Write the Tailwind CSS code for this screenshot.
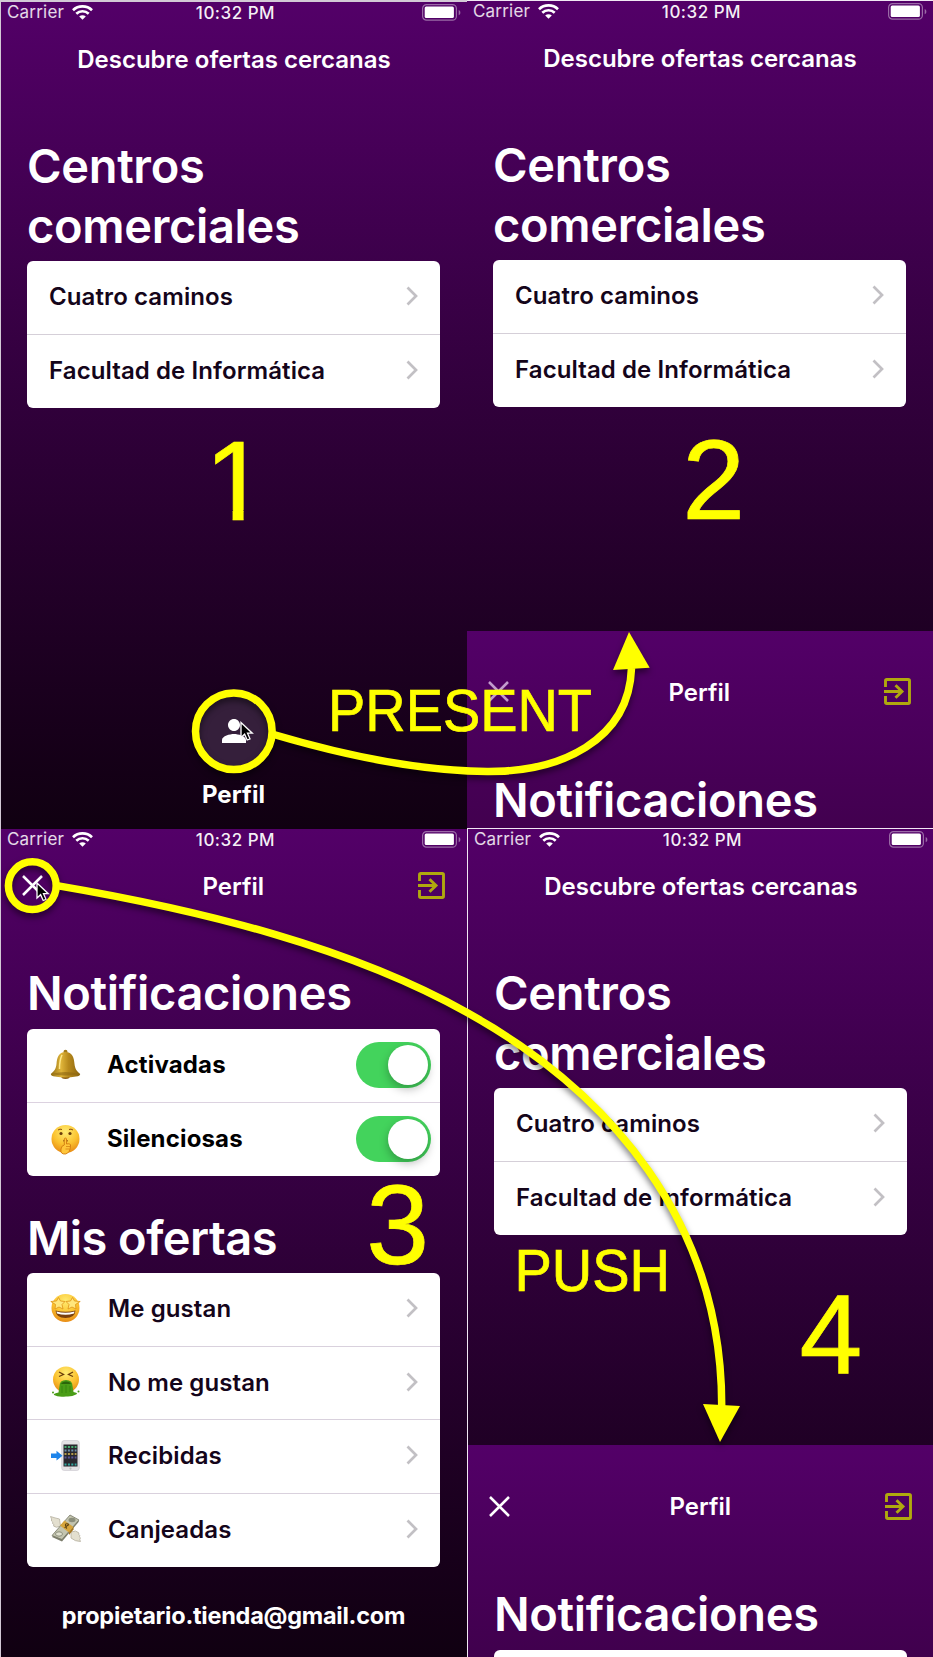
<!DOCTYPE html>
<html lang="es">
<head>
<meta charset="utf-8">
<title>Perfil: presentación de pantallas</title>
<script src="https://cdn.jsdelivr.net/npm/@tailwindcss/browser@4"></script>
</head>
<body class="bg-[#d3c9d6]">
<svg class="absolute size-0">
  <defs>
    <symbol id="wifi" viewBox="0 0 21 15"><path d="M1 5.2C6.2 .2 14.8 .2 20 5.2" fill="none" stroke="#fff" stroke-width="2.700"/><path d="M4.3 8.7C7.8 5.4 13.2 5.4 16.7 8.7" fill="none" stroke="#fff" stroke-width="2.700"/><path d="M10.500 14.700L7.200 11.400C9 9.800 12 9.800 13.800 11.400Z" fill="#fff"/></symbol>
    <symbol id="battery" viewBox="0 0 39 17"><rect x=".6" y=".6" width="33.800" height="15.600" rx="4" fill="none" stroke="#fff" stroke-opacity=".42" stroke-width="1.200"/><rect x="2.700" y="2.600" width="29.200" height="11.500" rx="1.500" fill="#fff"/><path d="M36.700 6v5.200c2.200-.8 2.200-4.400 0-5.200z" fill="#fff" fill-opacity=".42"/></symbol>
    <symbol id="chev" viewBox="0 0 12 20"><path d="M1.500 1.500L10 10L1.500 18.500" fill="none" stroke="#c2c0c4" stroke-width="2.700"/></symbol>
    <symbol id="exit" viewBox="0 0 27 27"><path d="M1.500 9V2.800Q1.500 1.500 2.800 1.500H24.200Q25.500 1.500 25.500 2.800V24.200Q25.500 25.500 24.200 25.500H2.800Q1.500 25.500 1.500 24.200V18M0 13.500H17.500M11.500 7.200L18 13.500L11.500 19.800" fill="none" stroke="#b0a90e" stroke-width="2.900"/></symbol>
    <symbol id="close" viewBox="0 0 21 21"><path d="M1 1L20 20M20 1L1 20" fill="none" stroke="currentColor" stroke-width="2.500"/></symbol>
    <linearGradient id="gold" x1="0" x2="1"><stop offset="0" stop-color="#8f6a10"/><stop offset=".35" stop-color="#e0b53a"/><stop offset=".6" stop-color="#b88a1c"/><stop offset="1" stop-color="#8a6410"/></linearGradient>
    <radialGradient id="face" cx=".5" cy=".25" r=".8"><stop offset="0" stop-color="#ffec72"/><stop offset=".55" stop-color="#fbc22f"/><stop offset="1" stop-color="#e58311"/></radialGradient>
    <clipPath id="stem"><path d="M200 430H262V510H243.600V524H232.600V510H200Z"/></clipPath>
  </defs>
</svg>
<main class="relative w-[933px] h-[1657px] overflow-hidden font-['Inter','Noto_Sans',sans-serif] text-white flex">

  <div class="w-[467px] shrink-0 pl-px pt-[2px] flex flex-col">
    <!-- 1: home -->
    <section class="h-[827px] shrink-0 flex flex-col overflow-hidden bg-linear-to-b from-[#530068] to-[#100011]">
      <div class="h-[21px] shrink-0 grid grid-cols-3 items-center pl-[6px] pr-[6px] text-[17px] leading-none text-white/85">
        <div class="flex items-center gap-[8px]"><span class="tracking-[0.2px]">Carrier</span><svg class="w-[21px] h-[15px]"><use href="#wifi"/></svg></div>
        <span class="text-center font-medium tracking-[0.5px] pl-[3px] pt-px text-white/95">10:32 PM</span>
        <svg class="w-[39px] h-[17px] justify-self-end"><use href="#battery"/></svg>
      </div>
      <div class="h-[72px] shrink-0 flex items-center justify-center pt-px text-[24px] font-semibold">Descubre ofertas cercanas</div>
      <h1 class="mt-[41px] ml-[26px] text-[47px] leading-[60px] font-semibold w-[300px] tracking-[-0.35px]">Centros comerciales</h1>
      <div class="mt-[5px] ml-[26px] mr-[27.500px] h-[147px] shrink-0 grid grid-rows-2 rounded-[6px] bg-white divide-y divide-[#d5cfd8] text-[24px] font-semibold text-[#14051a]">
        <div class="flex items-center justify-between pl-[22px] pr-[22px] pb-[2px]"><span class="mt-[2px] tracking-[0.1px]">Cuatro caminos</span><svg class="w-3 h-5"><use href="#chev"/></svg></div>
        <div class="flex items-center justify-between pl-[22px] pr-[22px] pb-[2px]"><span class="mt-[2px] tracking-[0.1px]">Facultad de Informática</span><svg class="w-3 h-5"><use href="#chev"/></svg></div>
      </div>
      <div class="mt-[281px] flex flex-col items-center pr-px">
        <div class="size-[84px] rounded-full bg-[#351f3b] flex items-center justify-center"><svg class="size-9 fill-white" viewBox="0 0 24 24"><path d="M12 12c2.210 0 4-1.790 4-4s-1.790-4-4-4-4 1.790-4 4 1.790 4 4 4zm0 2c-2.670 0-8 1.340-8 4v2h16v-2c0-2.660-5.330-4-8-4z"/></svg></div>
        <span class="mt-[4px] text-[24px] leading-[36px] font-bold tracking-[0.1px]">Perfil</span>
      </div>
    </section>

    <!-- 3: profile -->
    <section class="h-[828px] shrink-0 flex flex-col overflow-hidden bg-linear-to-b from-[#530068] to-[#100011]">
      <div class="h-[21px] shrink-0 grid grid-cols-3 items-center pl-[6px] pr-[6px] text-[17px] leading-none text-white/85">
        <div class="flex items-center gap-[8px]"><span class="tracking-[0.2px]">Carrier</span><svg class="w-[21px] h-[15px]"><use href="#wifi"/></svg></div>
        <span class="text-center font-medium tracking-[0.5px] pl-[3px] pt-px text-white/95">10:32 PM</span>
        <svg class="w-[39px] h-[17px] justify-self-end"><use href="#battery"/></svg>
      </div>
      <div class="h-[72px] shrink-0 flex items-center justify-between pl-[20.500px] pr-[22px] text-[24px] font-semibold">
        <svg class="w-[27px] h-[21px] mb-[2px]" viewBox="0 0 27 21"><use href="#close" width="21" height="21"/></svg><span class="mt-px">Perfil</span><svg class="size-[27px] mb-[2px]"><use href="#exit"/></svg>
      </div>
      <h1 class="mt-[41px] ml-[26px] text-[47px] leading-[60px] font-semibold tracking-[-0.35px]">Notificaciones</h1>
      <div class="mt-[6px] ml-[26px] mr-[27.500px] h-[147px] shrink-0 grid grid-rows-2 rounded-[6px] bg-white divide-y divide-[#dcd2e0] text-[24px] font-bold text-black">
        <div class="flex items-center pl-[23px] pr-[8.500px] pb-px">
          <svg class="w-[31px] h-[31px]" viewBox="0 0 31 31"><circle cx="15.500" cy="2.800" r="2" fill="#a27a18"/><ellipse cx="15.500" cy="27" rx="4.500" ry="3" fill="#8b5d17"/><path d="M15.500 3C8.500 3 7 9 6.500 15C6 20 4 22.500 .8 25Q1 27 5 27.500Q15.500 29.500 26 27.500Q30 27 30.200 25C27 22.500 25 20 24.500 15C24 9 22.500 3 15.500 3Z" fill="url(#gold)"/><path d="M2 25Q15.500 21 29 25Q15.500 28 2 25Z" fill="#8c6512" opacity=".6"/><path d="M12 6Q9.500 11 9.500 20" stroke="#ffe88a" stroke-width="1.500" fill="none"/></svg>
          <span class="ml-[26px] flex-1 tracking-[0.15px]">Activadas</span>
          <span class="w-[75px] h-[46px] rounded-full bg-[#43d35c] p-[3px] flex justify-end"><span class="size-10 rounded-full bg-white shadow-[0_4px_10px_rgba(0,0,0,.28)]"></span></span>
        </div>
        <div class="flex items-center pl-[23px] pr-[8.500px]">
          <svg class="w-[31px] h-[31px]" viewBox="0 0 31 31"><circle cx="15.500" cy="15" r="14" fill="url(#face)"/><circle cx="11" cy="9.500" r="1.600" fill="#6b3d0b"/><circle cx="20" cy="9.500" r="1.600" fill="#6b3d0b"/><path d="M8 6Q10 4.500 12 5.500M19 5.500Q21 4.500 23 6M13 17Q15.500 15.500 18 17" stroke="#8c4e0d" fill="none"/><path d="M14.300 15Q15.500 12.500 16.500 15V20Q21 19 20.500 22Q20 29 15.500 30Q10 30.500 11 25Q11.500 21.500 14.300 21Z" fill="#ffc63a" stroke="#d07a0e" stroke-width=".9"/><path d="M16 22.500h4M15.500 25h4" stroke="#d07a0e" stroke-width=".7"/></svg>
          <span class="ml-[26px] flex-1 tracking-[0.15px]">Silenciosas</span>
          <span class="w-[75px] h-[46px] rounded-full bg-[#43d35c] p-[3px] flex justify-end"><span class="size-10 rounded-full bg-white shadow-[0_4px_10px_rgba(0,0,0,.28)]"></span></span>
        </div>
      </div>
      <h1 class="mt-[32px] ml-[26px] text-[47px] leading-[60px] font-semibold tracking-[-0.55px]">Mis ofertas</h1>
      <div class="mt-[5px] ml-[26px] mr-[27.500px] h-[294px] shrink-0 grid grid-rows-4 rounded-[6px] bg-white divide-y divide-[#d9d1dd] text-[24px] font-semibold text-[#14051a]">
        <div class="flex items-center pl-[23px] pr-[22px] pb-[2px]">
          <svg class="size-[31px]" viewBox="0 0 31 31"><circle cx="15.500" cy="15" r="14" fill="url(#face)"/><path d="M5.500 17.500Q15.500 20 25.500 17.500Q25 25 15.500 25T5.500 17.500Z" fill="#7a3f0c"/><path d="M6.500 18.500Q15.500 21 24.500 18.500L24 20.500Q15.500 23 7 20.500Z" fill="#fff"/><path d="M8.500 4.500L10.500 8L15 8.500L12 11.500L13 16L9 14L5 16L5.500 11.500L.8 8.500L6.500 8Z" fill="#ffe67c" stroke="#dd9215" stroke-width=".8"/><path d="M22.500 4.500L20.500 8L16 8.500L19 11.500L18 16L22 14L26 16L25.500 11.500L30.200 8.500L24.500 8Z" fill="#ffe67c" stroke="#dd9215" stroke-width=".8"/></svg>
          <span class="mt-[2px] ml-[27px] flex-1 tracking-[0.1px]">Me gustan</span><svg class="w-3 h-5"><use href="#chev"/></svg></div>
        <div class="flex items-center pl-[23px] pr-[22px] pb-[2px]">
          <svg class="size-[31px]" viewBox="0 0 31 31"><circle cx="16" cy="13.500" r="13" fill="url(#face)"/><path d="M9 6l4.500 2.500L9 10.500M23 6l-4.500 2.500L23 10.500" fill="none" stroke="#6b3d0b" stroke-width="1.300"/><path d="M9.500 20Q9.500 14 16 14T22.500 20L23.500 26Q29 27 26 28.500Q22 31 16 30.500Q8 31.500 4 29Q3 27.500 8.500 26.500Z" fill="#4a9d17"/><path d="M11 18Q12 15.500 16 15.500T21 18Z" fill="#2c660b"/><circle cx="3" cy="26.500" r="1" fill="#4a9d17"/><circle cx="28.500" cy="25.500" r="1" fill="#4a9d17"/><path d="M12 20v7M16 19v8M20 20v6" stroke="#398610"/></svg>
          <span class="mt-[2px] ml-[27px] flex-1 tracking-[0.1px]">No me gustan</span><svg class="w-3 h-5"><use href="#chev"/></svg></div>
        <div class="flex items-center pl-[23px] pr-[22px] pb-[2px]">
          <svg class="size-[31px]" viewBox="0 0 31 31"><rect x="11.700" y=".5" width="17.600" height="30" rx="2.500" fill="#e4e2e5" stroke="#c9c6cc" stroke-width=".6"/><rect x="13.500" y="4.500" width="14" height="22" fill="#29272e"/><g stroke-width="2" stroke-dasharray="2 1.400"><path d="M14.500 7h12" stroke="#47ad72"/><path d="M14.500 10.500h12" stroke="#6d8faa"/><path d="M14.500 14h12" stroke="#b39a4a"/><path d="M14.500 17.500h12" stroke="#595596"/><path d="M14.500 24.500h12" stroke="#33a8a0"/></g><circle cx="20.500" cy="28.600" r="1.100" fill="#bbb"/><path d="M1 13.500H6.500V10.800L12.500 15.800L6.500 20.500V18H1Z" fill="#1e84ea"/></svg>
          <span class="mt-[2px] ml-[27px] flex-1 tracking-[0.1px]">Recibidas</span><svg class="w-3 h-5"><use href="#chev"/></svg></div>
        <div class="flex items-center pl-[23px] pr-[22px] pb-[2px]">
          <svg class="size-[31px]" viewBox="0 0 31 31"><path d="M.5 2.500Q5 4 9.500 5L10.500 12Q6 14.500 3.500 12Q5 10.500 2.500 9.500Q3.500 8 1.500 7Q2 5 .5 2.500ZM21 18Q26 15.500 29 19Q27.500 20.500 30 21.500Q28.500 23 30.500 24Q29 25 30.500 27.500Q25 27.500 21 24Z" fill="#e3dfcf" stroke="#b5b0a0" stroke-width=".8"/><path d="M2 23L20 2L29 7.500L12 27.500Z" fill="#7c7d6c"/><path d="M2 21.500L20 1L29 6L12 25.500Z" fill="#c3c4af" stroke="#777966" stroke-width=".8"/><ellipse cx="22" cy="6" rx="3.500" ry="2.200" fill="#8b8e7b"/><ellipse cx="9" cy="20" rx="3.500" ry="2.200" fill="#e0e0cf" stroke="#8b8e7b"/><path d="M10 11.500L14.500 6.500L23.500 13L19 18.500Z" fill="#d7a53c"/><path d="M19 18.500L23.500 13V15.500L19 21Z" fill="#a3731b"/><path d="M18.500 10Q15 9 15.500 11.500T17 14.500M14.500 13.500L19 10.500" stroke="#5d4211" fill="none" stroke-width="1.100"/></svg>
          <span class="mt-px ml-[27px] flex-1 tracking-[0.1px]">Canjeadas</span><svg class="w-3 h-5"><use href="#chev"/></svg></div>
      </div>
      <div class="mt-[30.500px] pr-px text-center text-[23.500px] leading-[36px] font-bold tracking-[-0.25px]">propietario.tienda@gmail.com</div>
    </section>
  </div>

  <div class="w-[466px] shrink-0 flex flex-col pt-px bg-[#f1e8f4]">
    <!-- 2: profile sheet rising -->
    <section class="h-[827px] shrink-0 flex flex-col overflow-hidden bg-linear-to-b from-[#530068] to-[#100011]">
      <div class="h-[21px] shrink-0 grid grid-cols-3 items-center pl-[6px] pr-[6px] text-[17px] leading-none text-white/85">
        <div class="flex items-center gap-[8px]"><span class="tracking-[0.2px]">Carrier</span><svg class="w-[21px] h-[15px]"><use href="#wifi"/></svg></div>
        <span class="text-center font-medium tracking-[0.5px] pl-[3px] pt-px text-white/95">10:32 PM</span>
        <svg class="w-[39px] h-[17px] justify-self-end"><use href="#battery"/></svg>
      </div>
      <div class="h-[72px] shrink-0 flex items-center justify-center pt-px text-[24px] font-semibold">Descubre ofertas cercanas</div>
      <h1 class="mt-[41px] ml-[26px] text-[47px] leading-[60px] font-semibold w-[300px] tracking-[-0.35px]">Centros comerciales</h1>
      <div class="mt-[5px] ml-[26px] mr-[27.500px] h-[147px] shrink-0 grid grid-rows-2 rounded-[6px] bg-white divide-y divide-[#d5cfd8] text-[24px] font-semibold text-[#14051a]">
        <div class="flex items-center justify-between pl-[22px] pr-[22px] pb-[2px]"><span class="mt-[2px] tracking-[0.1px]">Cuatro caminos</span><svg class="w-3 h-5"><use href="#chev"/></svg></div>
        <div class="flex items-center justify-between pl-[22px] pr-[22px] pb-[2px]"><span class="mt-[2px] tracking-[0.1px]">Facultad de Informática</span><svg class="w-3 h-5"><use href="#chev"/></svg></div>
      </div>
      <div class="mt-[224px] h-[197px] shrink-0 pt-[25px] bg-linear-to-b from-[#530068] to-[#42004f]">
        <div class="h-[72px] flex items-center justify-between pl-[20.500px] pr-[22px] text-[24px] font-semibold">
          <svg class="w-[27px] h-[21px] mb-[2px] text-[#c29ccd]" viewBox="0 0 27 21"><use href="#close" width="21" height="21"/></svg><span class="mt-px">Perfil</span><svg class="size-[27px] mb-[2px]"><use href="#exit"/></svg>
        </div>
        <h1 class="mt-[42px] ml-[26px] text-[47px] leading-[60px] font-semibold tracking-[-0.35px]">Notificaciones</h1>
      </div>
    </section>

    <!-- 4: profile sheet leaving -->
    <section class="mt-px ml-px h-[828px] shrink-0 flex flex-col overflow-hidden bg-linear-to-b from-[#530068] to-[#100011]">
      <div class="h-[21px] w-[466px] shrink-0 grid grid-cols-3 items-center pl-[6px] pr-[6px] text-[17px] leading-none text-white/85">
        <div class="flex items-center gap-[8px]"><span class="tracking-[0.2px]">Carrier</span><svg class="w-[21px] h-[15px]"><use href="#wifi"/></svg></div>
        <span class="text-center font-medium tracking-[0.5px] pl-[3px] pt-px text-white/95">10:32 PM</span>
        <svg class="w-[39px] h-[17px] justify-self-end"><use href="#battery"/></svg>
      </div>
      <div class="h-[72px] w-[466px] shrink-0 flex items-center justify-center pt-px text-[24px] font-semibold">Descubre ofertas cercanas</div>
      <h1 class="mt-[41px] ml-[26px] text-[47px] leading-[60px] font-semibold w-[300px] tracking-[-0.35px]">Centros comerciales</h1>
      <div class="mt-[5px] ml-[26px] mr-[26.500px] h-[147px] shrink-0 grid grid-rows-2 rounded-[6px] bg-white divide-y divide-[#d5cfd8] text-[24px] font-semibold text-[#14051a]">
        <div class="flex items-center justify-between pl-[22px] pr-[22px] pb-[2px]"><span class="mt-[2px] tracking-[0.1px]">Cuatro caminos</span><svg class="w-3 h-5"><use href="#chev"/></svg></div>
        <div class="flex items-center justify-between pl-[22px] pr-[22px] pb-[2px]"><span class="mt-[2px] tracking-[0.1px]">Facultad de Informática</span><svg class="w-3 h-5"><use href="#chev"/></svg></div>
      </div>
      <div class="mt-[210px] h-[212px] shrink-0 pt-[25px] bg-linear-to-b from-[#530068] to-[#40004d]">
        <div class="h-[72px] w-[466px] flex items-center justify-between pl-[20.500px] pr-[22px] text-[24px] font-semibold">
          <svg class="w-[27px] h-[21px]" viewBox="0 0 27 21"><use href="#close" width="21" height="21"/></svg><span class="mt-[2px]">Perfil</span><svg class="size-[27px]"><use href="#exit"/></svg>
        </div>
        <h1 class="mt-[42px] ml-[26px] text-[47px] leading-[60px] font-semibold tracking-[-0.35px]">Notificaciones</h1>
        <div class="mt-[5.500px] ml-[26px] mr-[26.500px] h-[147px] rounded-[6px] bg-white"></div>
      </div>
    </section>
  </div>

  <!-- annotations over the four screens -->
  <svg class="absolute inset-0 font-['Liberation_Sans',Arial,sans-serif]" width="933" height="1657" viewBox="0 0 933 1657">
    <g fill="#000" stroke="#fff" stroke-width="1.300">
      <path d="M241 722.500V737.500L244.600 734.200L247.200 740L250 738.800L247.500 733.200H252.300Z"/>
      <path d="M37 883V898L40.600 894.700L43.200 900.500L46 899.300L43.500 893.700H48.300Z"/>
    </g>
    <g class="drop-shadow-[0_4px_3px_rgba(0,0,0,.5)]" fill="none" stroke="#ff0" stroke-width="7.500">
      <circle cx="233.800" cy="731.200" r="38.300"/>
      <circle cx="32.300" cy="885.700" r="23.900"/>
      <path d="M272 734C343 755 420 771 487 771.500C560 772 629 741 631.500 668"/>
      <path d="M57 885.600C206 911 352 948 467 1012.500C610 1092 722 1222 721.700 1406"/>
      <path d="M629 632L613 670L649.700 667.700Z" fill="#ff0" stroke="none"/>
      <path d="M720 1442L703 1404L740 1406Z" fill="#ff0" stroke="none"/>
    </g>
    <g fill="#ff0" stroke="#ff0" stroke-width=".7">
      <text x="328" y="731.300" font-size="59" textLength="264" lengthAdjust="spacingAndGlyphs">PRESENT</text>
      <text x="514.500" y="1290.600" font-size="58.500" textLength="155.500" lengthAdjust="spacingAndGlyphs">PUSH</text>
      <text x="204.700" y="519.500" font-size="113" clip-path="url(#stem)">1</text>
      <text x="682.300" y="519" font-size="113">2</text>
      <text x="366.300" y="1264" font-size="113">3</text>
      <text x="799.500" y="1373.500" font-size="113">4</text>
    </g>
  </svg>
</main>
</body>
</html>
